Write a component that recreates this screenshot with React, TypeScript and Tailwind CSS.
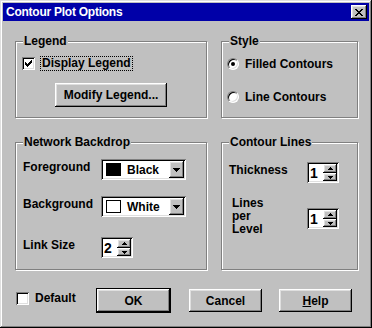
import React from "react";

const raised =
  "shadow-[inset_-1px_-1px_0_#000,inset_1px_1px_0_#fff,inset_-2px_-2px_0_#808080,inset_2px_2px_0_#dfdfdf]";
const sunken =
  "shadow-[inset_1px_1px_0_#808080,inset_-1px_-1px_0_#fff,inset_2px_2px_0_#000,inset_-2px_-2px_0_#dfdfdf]";

const checkRows = ["......#", ".....##", "#...###", "##.###.", "#####..", ".###...", "..#...."];

const CheckMark = () => (
  <svg width="7" height="7" viewBox="0 0 7 7" shapeRendering="crispEdges">
    {checkRows.map((row, y) =>
      row.split("").map((c, x) =>
        c === "#" ? <rect key={`${x}-${y}`} x={x} y={y} width="1" height="1" fill="#000" /> : null
      )
    )}
  </svg>
);

const Checkbox = ({ checked }: { checked?: boolean }) => (
  <div className={`w-[13px] h-[13px] shrink-0 bg-white flex items-center justify-center ${sunken}`}>
    {checked && <CheckMark />}
  </div>
);

const Radio = ({ checked }: { checked?: boolean }) => (
  <div className="w-[12px] h-[12px] shrink-0 rounded-full bg-white border border-t-[#808080] border-l-[#808080] border-b-white border-r-white shadow-[inset_1px_1px_0_#000,inset_-1px_-1px_0_#dfdfdf] flex items-center justify-center">
    {checked && <div className="w-[4px] h-[4px] rounded-full bg-black" />}
  </div>
);

const Group = ({
  title,
  className,
  children,
}: {
  title: string;
  className: string;
  children?: React.ReactNode;
}) => (
  <div className={`relative border border-[#808080] shadow-[inset_1px_1px_0_#fff,1px_1px_0_#fff] ${className}`}>
    <span className="absolute left-[7px] -top-[8px] bg-[#c0c0c0] px-[1px] leading-[14px]">{title}</span>
    {children}
  </div>
);

const Button = ({ children, main }: { children: React.ReactNode; main?: boolean }) => (
  <div className={main ? "border border-black" : "p-[1px]"}>
    <div className={`w-[73px] h-[23px] bg-[#c0c0c0] flex items-center justify-center ${raised}`}>
      {children}
    </div>
  </div>
);

const DownArrow = () => (
  <svg width="7" height="4" viewBox="0 0 7 4" shapeRendering="crispEdges">
    <path d="M0 0h7v1h-1v1h-1v1h-1v1h-1v-1h-1v-1h-1v-1h-1z" fill="#000" />
  </svg>
);

const Combo = ({ swatch, label }: { swatch: string; label: string }) => (
  <div className={`w-[85px] h-[21px] bg-white flex items-center p-[2px] ${sunken}`}>
    <div className={`ml-[3px] w-[15px] h-[13px] border border-black ${swatch}`} />
    <span className="ml-[6px] flex-1 leading-[14px]">{label}</span>
    <div className={`w-[15px] h-[17px] bg-[#c0c0c0] flex items-center justify-center ${raised}`}>
      <DownArrow />
    </div>
  </div>
);

const Spin = ({ value }: { value: string }) => (
  <div className={`w-[32px] h-[21px] bg-white flex items-center p-[2px] ${sunken}`}>
    <span className="flex-1 pl-[1px] text-[14px] leading-[14px]">{value}</span>
    <div className="w-[14px] h-[17px] flex flex-col">
      <div className={`h-[9px] bg-[#c0c0c0] flex items-center justify-center ${raised}`}>
        <svg width="5" height="3" viewBox="0 0 5 3" shapeRendering="crispEdges">
          <path d="M2 0h1v1h1v1h1v1h-5v-1h1v-1h1z" fill="#000" />
        </svg>
      </div>
      <div className={`h-[8px] bg-[#c0c0c0] flex items-center justify-center ${raised}`}>
        <svg width="5" height="3" viewBox="0 0 5 3" shapeRendering="crispEdges">
          <path d="M0 0h5v1h-1v1h-1v1h-1v-1h-1v-1h-1z" fill="#000" />
        </svg>
      </div>
    </div>
  </div>
);

export default function App() {
  return (
    <div
      className="w-[372px] h-[328px] bg-[#c0c0c0] p-[3px] flex flex-col text-black text-[12px] font-bold shadow-[inset_-1px_-1px_0_#000,inset_1px_1px_0_#dfdfdf,inset_-2px_-2px_0_#808080,inset_2px_2px_0_#fff]"
      style={{ fontFamily: '"Liberation Sans", Arial, sans-serif' }}
    >
      <div className="h-[18px] bg-[#0000a8] flex items-center justify-between pl-[3px] pr-[2px]">
        <span className="text-white tracking-[-0.25px] leading-[14px]">Contour Plot Options</span>
        <div className={`w-[16px] h-[14px] bg-[#c0c0c0] flex items-center justify-center ${raised}`}>
          <svg width="8" height="7" viewBox="0 0 8 7" shapeRendering="crispEdges">
            <path
              d="M0 0h2v1h1v1h2v-1h1v-1h2v1h-1v1h-1v1h-1v1h1v1h1v1h1v1h-2v-1h-1v-1h-2v1h-1v1h-2v-1h1v-1h1v-1h1v-1h-1v-1h-1v-1h-1z"
              fill="#000"
            />
          </svg>
        </div>
      </div>

      <div className="pl-[12px] pt-[20px] flex flex-col">
        <div className="grid grid-cols-[192px_137px] grid-rows-[77px_128px] gap-x-[14px] gap-y-[24px]">
          <Group title="Legend" className="pt-[14px] pl-[6px]">
            <div className="flex items-center">
              <Checkbox checked />
              <span className="ml-[5px] border border-dotted border-black px-[1px] leading-[13px]">
                Display Legend
              </span>
            </div>
            <div className="mt-[12px] ml-[33px] w-[112px] h-[24px]">
              <div className={`w-full h-full flex items-center justify-center ${raised}`}>Modify Legend...</div>
            </div>
          </Group>

          <Group title="Style" className="pt-[15px] pl-[5px] flex flex-col">
            <div className="flex items-center">
              <Radio checked />
              <span className="ml-[6px] leading-[14px]">Filled Contours</span>
            </div>
            <div className="flex items-center mt-[19px]">
              <Radio />
              <span className="ml-[6px] leading-[14px]">Line Contours</span>
            </div>
          </Group>

          <Group title="Network Backdrop" className="pt-[16px] pl-[7px] flex flex-col">
            <div className="flex items-start">
              <span className="w-[78px] mt-[1px] leading-[14px]">Foreground</span>
              <Combo swatch="bg-black" label="Black" />
            </div>
            <div className="flex items-start mt-[16px]">
              <span className="w-[78px] mt-[1px] leading-[14px]">Background</span>
              <Combo swatch="bg-white" label="White" />
            </div>
            <div className="flex items-start mt-[20px]">
              <span className="w-[78px] mt-[1px] leading-[14px]">Link Size</span>
              <Spin value="2" />
            </div>
          </Group>

          <Group title="Contour Lines" className="pt-[19px] pl-[7px] flex flex-col">
            <div className="flex items-start">
              <span className="w-[78px] mt-[1px] leading-[14px]">Thickness</span>
              <Spin value="1" />
            </div>
            <div className="flex items-start mt-[14px]">
              <span className="w-[78px] pl-[3px] leading-[13px]">
                Lines
                <br />
                per
                <br />
                Level
              </span>
              <div className="mt-[11px]">
                <Spin value="1" />
              </div>
            </div>
          </Group>
        </div>

        <div className="flex items-start mt-[18px] ml-[1px]">
          <div className="w-[80px] flex items-center mt-[3px]">
            <Checkbox />
            <span className="ml-[6px] leading-[14px]">Default</span>
          </div>
          <Button main>OK</Button>
          <div className="ml-[17px]">
            <Button>Cancel</Button>
          </div>
          <div className="ml-[15px]">
            <Button>
              <span>
                <span className="underline">H</span>elp
              </span>
            </Button>
          </div>
        </div>
      </div>
    </div>
  );
}
